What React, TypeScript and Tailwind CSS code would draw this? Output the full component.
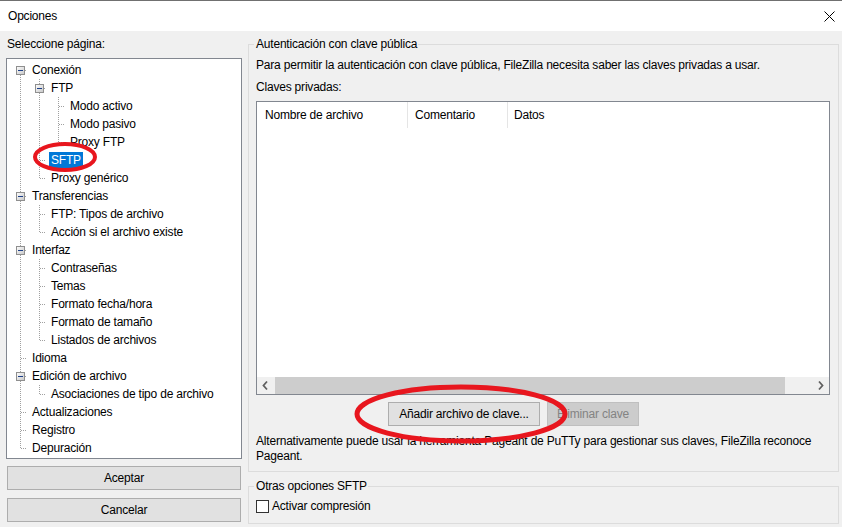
type Node = {
  t: string;
  l: number;
  exp?: boolean;
  last?: boolean;
  first?: boolean;
  sel?: boolean;
};

const tree: Node[] = [
  { t: "Conexión", l: 0, exp: true, first: true },
  { t: "FTP", l: 1, exp: true },
  { t: "Modo activo", l: 2 },
  { t: "Modo pasivo", l: 2 },
  { t: "Proxy FTP", l: 2, last: true },
  { t: "SFTP", l: 1, sel: true },
  { t: "Proxy genérico", l: 1, last: true },
  { t: "Transferencias", l: 0, exp: true },
  { t: "FTP: Tipos de archivo", l: 1 },
  { t: "Acción si el archivo existe", l: 1, last: true },
  { t: "Interfaz", l: 0, exp: true },
  { t: "Contraseñas", l: 1 },
  { t: "Temas", l: 1 },
  { t: "Formato fecha/hora", l: 1 },
  { t: "Formato de tamaño", l: 1 },
  { t: "Listados de archivos", l: 1, last: true },
  { t: "Idioma", l: 0 },
  { t: "Edición de archivo", l: 0, exp: true },
  { t: "Asociaciones de tipo de archivo", l: 1, last: true },
  { t: "Actualizaciones", l: 0 },
  { t: "Registro", l: 0 },
  { t: "Depuración", l: 0, last: true },
];

const dot = { stroke: "#a0a0a0", strokeDasharray: "1 1" };

// one indent cell of the tree, drawn as svg
const Cell = ({ n, pass }: { n?: Node; pass?: boolean }) => {
  if (pass) {
    return (
      <svg width="19" height="18" className="shrink-0">
        <line x1="12.5" y1="0" x2="12.5" y2="18" {...dot} />
      </svg>
    );
  }
  const exp = n?.exp;
  return (
    <svg width="19" height="18" className="shrink-0">
      {!n?.first && <line x1="12.5" y1="0" x2="12.5" y2={exp ? 5 : 9} {...dot} />}
      {!n?.last && <line x1="12.5" y1={exp ? 14 : 10} x2="12.5" y2="18" {...dot} />}
      <line x1={exp ? 17 : 13} y1="9.5" x2="19" y2="9.5" {...dot} />
      {exp && (
        <>
          <defs>
            <linearGradient id="bx" x1="0" y1="0" x2="1" y2="1">
              <stop offset="0" stopColor="#ffffff" />
              <stop offset="1" stopColor="#c6c6c6" />
            </linearGradient>
          </defs>
          <rect x="8.5" y="5.5" width="8" height="8" fill="url(#bx)" stroke="#8f8f8f" />
          <line x1="10" y1="9.5" x2="15" y2="9.5" stroke="#1c3f88" />
        </>
      )}
    </svg>
  );
};

const TreeRow = ({ n }: { n: Node }) => (
  <div className="flex h-[18px] items-center">
    {Array.from({ length: n.l }).map((_, i) => (
      <Cell key={i} pass />
    ))}
    <Cell n={n} />
    <span
      className={
        "ml-[3px] whitespace-nowrap px-[2px] leading-[17px] " +
        (n.sel ? "bg-[#0078d7] text-white" : "")
      }
    >
      {n.t}
    </span>
  </div>
);

const Chevron = ({ right }: { right?: boolean }) => (
  <div className="flex h-[17px] w-[17px] shrink-0 items-center justify-center">
    <svg width="17" height="17">
      <polyline
        points={right ? "7,4.5 10.5,8.5 7,12.5" : "10,4.5 6.5,8.5 10,12.5"}
        fill="none"
        stroke="#606060"
        strokeWidth="1.8"
      />
    </svg>
  </div>
);

export default function App() {
  return (
    <div className="relative flex h-[527px] w-[842px] flex-col overflow-hidden bg-[#f0f0f0] font-['Liberation_Sans',Arial,sans-serif] text-[12px] leading-[15px] tracking-[-0.2px] text-black">
      {/* title bar */}
      <div className="flex h-[31px] shrink-0 items-center justify-between border-t border-[#707070] bg-white pl-[8px] pr-[7px]">
        <span>Opciones</span>
        <svg width="11" height="11">
          <line x1="0.5" y1="0.5" x2="10.5" y2="10.5" stroke="#000" />
          <line x1="10.5" y1="0.5" x2="0.5" y2="10.5" stroke="#000" />
        </svg>
      </div>

      <div className="flex gap-[6px] pl-[6px]">
        {/* left column */}
        <div className="flex w-[236px] flex-col">
          <div className="mt-[6px] pl-[1px]">Seleccione página:</div>
          <div className="mt-[6px] h-[401px] border border-[#828790] bg-white pl-[1px] pt-[2px]">
            {tree.map((n, i) => (
              <TreeRow key={i} n={n} />
            ))}
          </div>
          <button className="mx-[1px] mt-[7px] h-[24px] border border-[#adadad] bg-[#e1e1e1]">
            Aceptar
          </button>
          <button className="mx-[1px] mt-[8px] h-[24px] border border-[#adadad] bg-[#e1e1e1]">
            Cancelar
          </button>
        </div>

        {/* right column */}
        <div className="flex w-[591px] flex-col">
          <fieldset className="mt-[6px] border border-[#dcdcdc]">
            <legend className="ml-[5px] pl-[2px] pr-[1px]">Autenticación con clave pública</legend>
            <div className="flex flex-col px-[7px] pb-[7px] pt-[6px]">
              <p>
                Para permitir la autenticación con clave pública, FileZilla necesita saber las
                claves privadas a usar.
              </p>
              <p className="mt-[7px]">Claves privadas:</p>

              <div className="mt-[6px] flex h-[294px] w-[574px] flex-col border border-[#828790] bg-white">
                <div className="flex h-[26px] leading-[26px]">
                  <div className="w-[151px] border-r border-[#e5e5e5] pl-[8px]">Nombre de archivo</div>
                  <div className="w-[100px] border-r border-[#e5e5e5] pl-[7px]">Comentario</div>
                  <div className="pl-[6px]">Datos</div>
                </div>
                <div className="flex-1" />
                <div className="flex h-[17px] bg-[#f0f0f0]">
                  <Chevron />
                  <div className="ml-[1px] w-[510px] bg-[#cdcdcd]" />
                  <div className="flex-1" />
                  <Chevron right />
                </div>
              </div>

              <div className="mt-[7px] flex gap-[7px] pl-[132px]">
                <button className="h-[24px] w-[152px] border border-[#adadad] bg-[#e1e1e1]">
                  Añadir archivo de clave...
                </button>
                <button className="h-[24px] w-[92px] border border-[#bfbfbf] bg-[#cccccc] text-[#838383]">
                  Eliminar clave
                </button>
              </div>

              <p className="mt-[8px]">
                Alternativamente puede usar la herramienta Pageant de PuTTy para gestionar sus
                claves, FileZilla reconoce
                <br />
                Pageant.
              </p>
            </div>
          </fieldset>

          <fieldset className="mt-[7px] border border-[#dcdcdc]">
            <legend className="ml-[5px] pl-[2px] pr-[1px]">Otras opciones SFTP</legend>
            <div className="flex items-center gap-[3px] px-[7px] pb-[9px] pt-[5px]">
              <span className="h-[13px] w-[13px] border border-[#333333] bg-white" />
              <span>Activar compresión</span>
            </div>
          </fieldset>
        </div>
      </div>

      {/* red annotation marks over the screenshot */}
      <svg className="pointer-events-none absolute left-0 top-0" width="842" height="527">
        <ellipse cx="65" cy="157" rx="30" ry="13" fill="none" stroke="#e8161e" strokeWidth="4" />
        <ellipse cx="461" cy="414" rx="104" ry="27" fill="none" stroke="#e8161e" strokeWidth="5" />
      </svg>
    </div>
  );
}
